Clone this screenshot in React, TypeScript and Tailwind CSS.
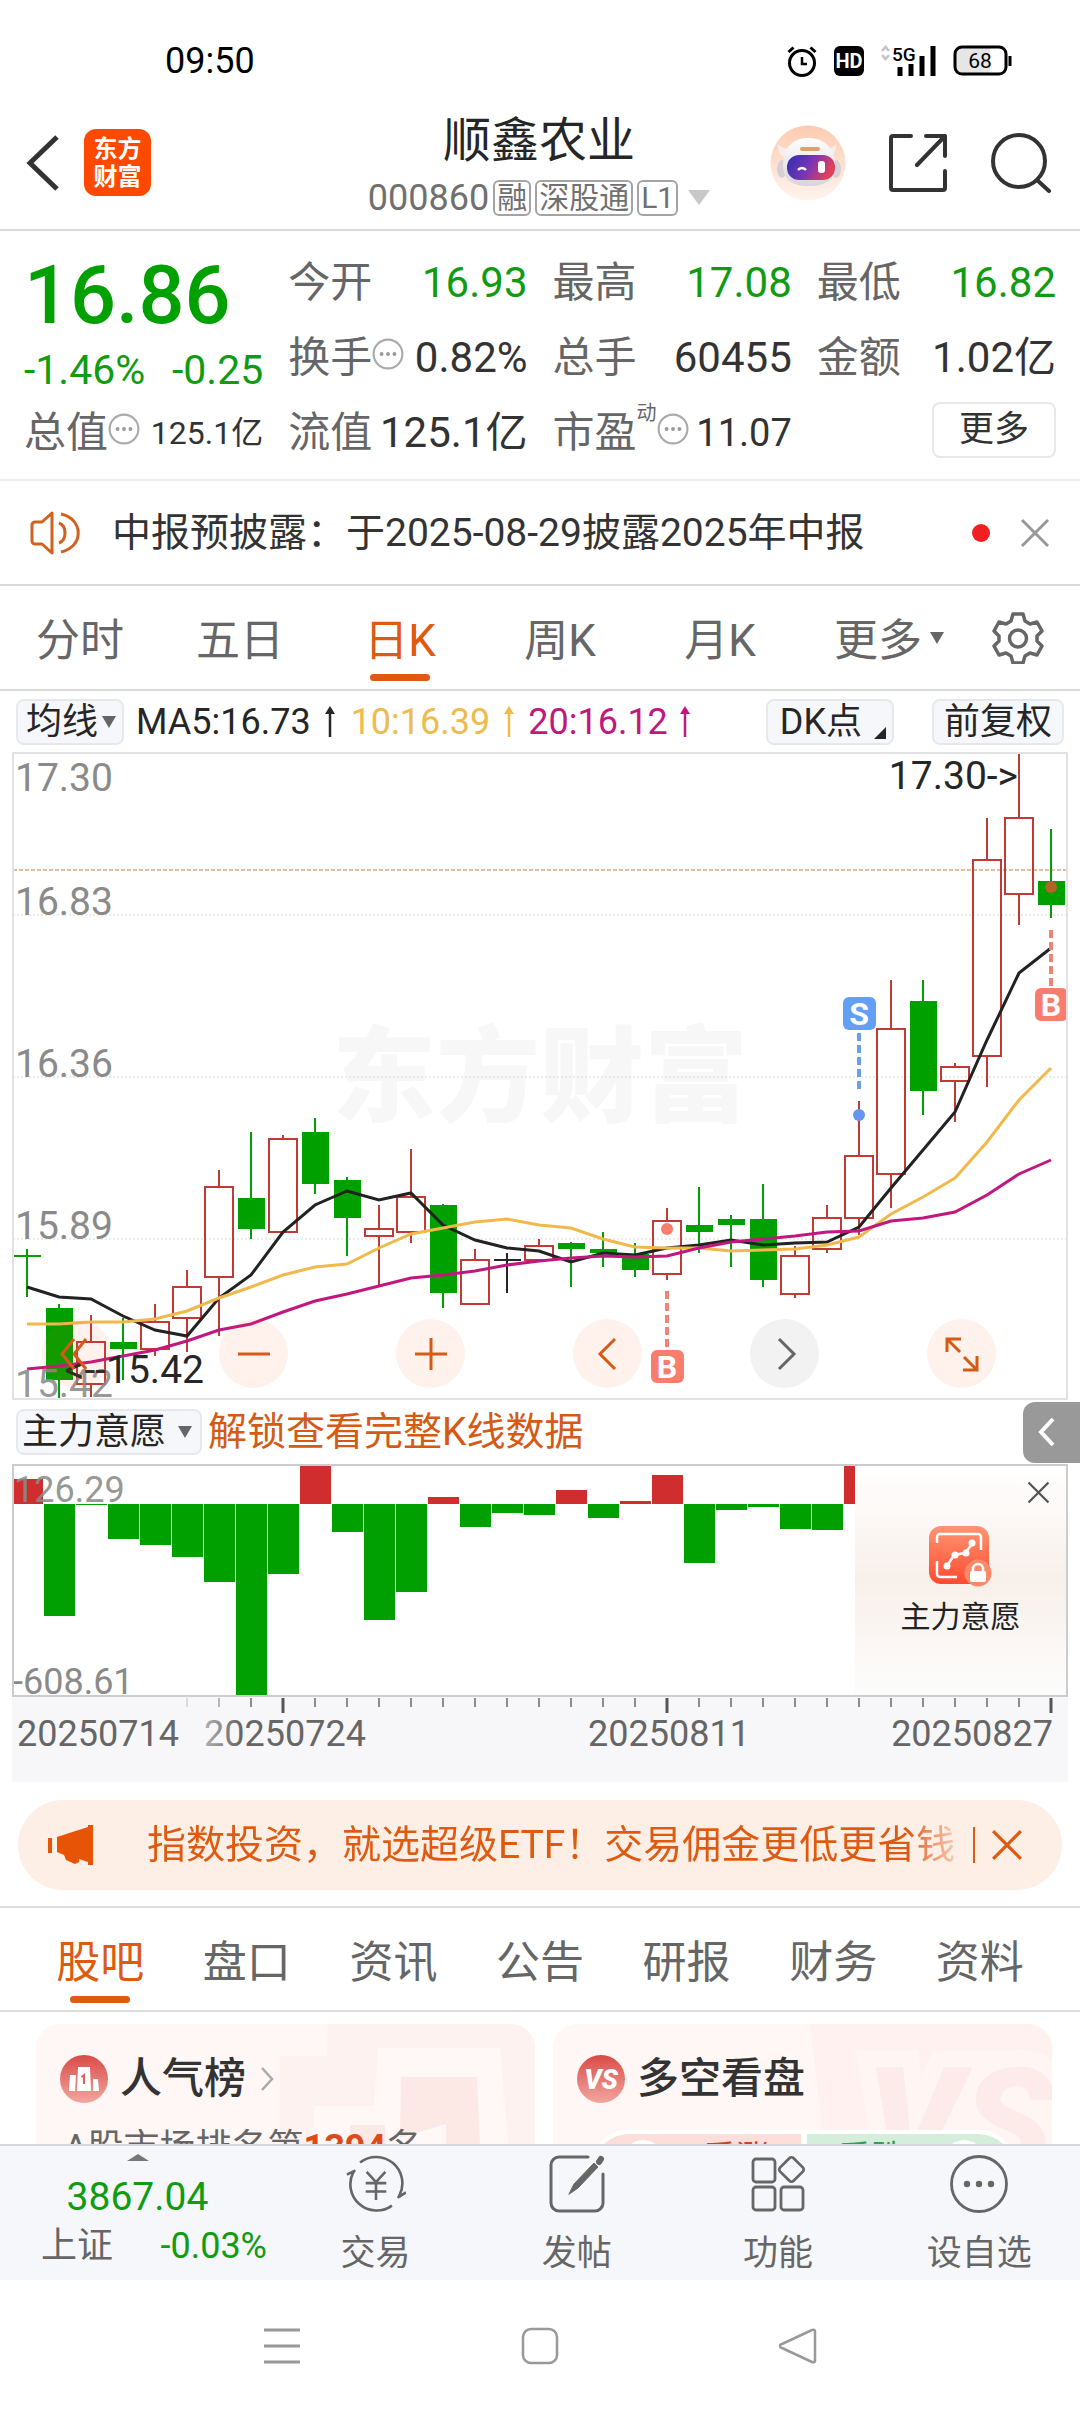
import React from "react";

type Tone = "up" | "down" | "flat";
type Candle = [high: number, top: number, bottom: number, low: number, tone: Tone];

const RED = "#c23a36";
const GREEN = "#00a000";

const candles: Candle[] = [
  [1210, 1224, 1229, 1324, "down"],
  [1341, 1349, 1520, 1566, "down"],
  [1366, 1431, 1530, 1562, "up"],
  [1374, 1431, 1447, 1521, "down"],
  [1341, 1382, 1447, 1463, "up"],
  [1259, 1300, 1374, 1455, "up"],
  [1022, 1062, 1276, 1415, "up"],
  [931, 1088, 1161, 1186, "down"],
  [939, 947, 1169, 1169, "up"],
  [899, 931, 1055, 1079, "down"],
  [1038, 1046, 1136, 1226, "down"],
  [1104, 1161, 1179, 1300, "up"],
  [972, 1087, 1169, 1194, "up"],
  [1103, 1105, 1315, 1349, "down"],
  [1210, 1235, 1341, 1341, "up"],
  [1218, 1233, 1238, 1315, "flat"],
  [1185, 1202, 1235, 1240, "up"],
  [1192, 1194, 1209, 1300, "down"],
  [1169, 1210, 1218, 1251, "down"],
  [1194, 1221, 1259, 1276, "down"],
  [1112, 1144, 1268, 1283, "up"],
  [1063, 1152, 1169, 1218, "down"],
  [1128, 1137, 1152, 1251, "down"],
  [1055, 1137, 1283, 1300, "down"],
  [1202, 1226, 1317, 1325, "up"],
  [1104, 1136, 1210, 1218, "up"],
  [858, 989, 1136, 1175, "up"],
  [571, 686, 1030, 1112, "up"],
  [571, 620, 833, 890, "down"],
  [767, 776, 810, 908, "up"],
  [186, 284, 751, 825, "up"],
  [30, 186, 367, 440, "up"],
  [211, 334, 391, 424, "down"],
];

const ma5 = [1299, 1324, 1328, 1368, 1401, 1416, 1325, 1270, 1169, 1104, 1072, 1092, 1077, 1152, 1187, 1207, 1215, 1240, 1219, 1223, 1207, 1199, 1189, 1201, 1196, 1193, 1158, 1065, 975, 884, 712, 553, 495];
const ma10 = [1388, 1388, 1382, 1383, 1375, 1357, 1325, 1299, 1270, 1253, 1244, 1208, 1174, 1160, 1146, 1139, 1153, 1159, 1186, 1205, 1207, 1208, 1213, 1212, 1210, 1200, 1180, 1127, 1087, 1040, 955, 856, 779];
const ma20 = [1494, 1487, 1478, 1463, 1450, 1427, 1402, 1387, 1358, 1332, 1316, 1298, 1278, 1272, 1261, 1248, 1239, 1230, 1227, 1229, 1225, 1208, 1193, 1185, 1178, 1170, 1166, 1143, 1136, 1122, 1080, 1032, 997];

const flow = [79, 216, 105, 139, 145, 157, 182, 296, 174, 65, 132, 220, 192, 97, 127, 113, 115, 90, 118, 101, 75, 163, 110, 107, 129, 130, 65];

const xAt = (i: number) => 27 + 32 * i;
const yAt = (v: number) => Math.round(v / 2.376);
const line = (values: number[]) => values.map((v, i) => `${xAt(i)},${yAt(v)}`).join(" ");

function Marker({ x, y, label, color }: { x: number; y: number; label: string; color: string }) {
  return (
    <g>
      <rect x={x - 16} y={y} width={33} height={33} rx={6} fill={color} />
      <text x={x} y={y + 28} textAnchor="middle" fontSize={32} fontWeight={700} fill="#fff">{label}</text>
    </g>
  );
}

function PriceChart() {
  return (
    <svg viewBox="12 12 1056 648" className="block w-full" role="img" aria-label="日K线图">
      <text x={540} y={374} textAnchor="middle" fontSize={104} fontWeight={900} fill="#f7f7f7">东方财富</text>
      {[175, 337, 499].map((y) => (
        <line key={y} x1={13} x2={1067} y1={y} y2={y} stroke="#d9d9d9" strokeWidth={1} strokeDasharray="2 2" />
      ))}
      <line x1={13} x2={1067} y1={130} y2={130} stroke="#c27c4a" strokeWidth={1} strokeDasharray="4 2" />
      <g fontSize={39} fill="#8a8a8a">
        <text x={15} y={51}>17.30</text>
        <text x={15} y={175}>16.83</text>
        <text x={15} y={337}>16.36</text>
        <text x={15} y={499}>15.89</text>
      </g>
      {candles.map(([h, t, b, l, tone], i) => {
        const x = xAt(i);
        const color = tone === "up" ? RED : tone === "down" ? GREEN : "#262626";
        const top = yAt(t);
        const height = Math.max(2, yAt(b) - top);
        return (
          <g key={i}>
            <line x1={x} x2={x} y1={yAt(h)} y2={top} stroke={color} strokeWidth={2} />
            <line x1={x} x2={x} y1={yAt(b)} y2={yAt(l)} stroke={color} strokeWidth={2} />
            {tone === "up" ? (
              <rect x={x - 14} y={top} width={28} height={height} fill="none" stroke={color} strokeWidth={2} />
            ) : (
              <rect x={x - 13} y={top} width={27} height={height} fill={color} />
            )}
          </g>
        );
      })}
      <polyline points={line(ma5)} fill="none" stroke="#222" strokeWidth={3} />
      <polyline points={line(ma10)} fill="none" stroke="#f0b94c" strokeWidth={3} />
      <polyline points={line(ma20)} fill="none" stroke="#c0187e" strokeWidth={3} />
      <text x={15} y={657} fontSize={39} fill="#8a8a8a" fillOpacity={0.9}>15.42</text>
      <text x={204} y={643} textAnchor="end" fontSize={39} fill="#262626">&lt;--15.42</text>
      <text x={1018} y={49} textAnchor="end" fontSize={39} fill="#262626">17.30-&gt;</text>
      <circle cx={667} cy={489} r={6} fill="#f97d6d" />
      <circle cx={859} cy={375} r={6} fill="#6496f0" />
      <circle cx={1051} cy={147} r={6} fill="#b5612a" />
      <line x1={667} x2={667} y1={551} y2={608} stroke="#ee8476" strokeWidth={4} strokeDasharray="8 4" />
      <line x1={859} x2={859} y1={293} y2={350} stroke="#6aa0ea" strokeWidth={4} strokeDasharray="8 4" />
      <line x1={1051} x2={1051} y1={190} y2={246} stroke="#ee8476" strokeWidth={4} strokeDasharray="8 4" />
      <Marker x={667} y={610} label="B" color="#f97d6d" />
      <Marker x={859} y={257} label="S" color="#62a0f8" />
      <Marker x={1051} y={248} label="B" color="#f97d6d" />
    </svg>
  );
}

function FlowChart() {
  return (
    <svg viewBox="12 64 1056 233" className="block w-full" role="img" aria-label="主力意愿">
      {flow.map((v, i) => {
        const up = v < 104;
        const left = i === 0 ? 13 : xAt(i) - 15;
        const right = i === 26 ? 857 : xAt(i) + 16;
        return (
          <rect key={i} x={left} width={right - left} y={up ? v : 104} height={Math.abs(v - 104)} fill={up ? "#d02e2e" : GREEN} />
        );
      })}
      <g fontSize={36} fill="#8a8a8a">
        <text x={14} y={102} fillOpacity={0.9}>126.29</text>
        <text x={13} y={294}>-608.61</text>
      </g>
    </svg>
  );
}

function DateAxis() {
  const ticks = Array.from({ length: 28 }, (_, k) => k + 5);
  return (
    <svg viewBox="12 297 1056 85" className="block w-full bg-[#f7f7fa]" role="img" aria-label="日期">
      <defs>
        <linearGradient id="dateFade" gradientUnits="userSpaceOnUse" x1={195} x2={240} y1={0} y2={0}>
          <stop offset="0" stopColor="#c4c4c6" />
          <stop offset="1" stopColor="#666" />
        </linearGradient>
      </defs>
      {ticks.map((i) => {
        const major = i === 8 || i === 20 || i === 32;
        return (
          <line key={i} x1={xAt(i)} x2={xAt(i)} y1={298} y2={major ? 313 : 307} stroke={major ? "#555" : "#8c8c8c"} strokeWidth={major ? 3 : 2} opacity={i === 5 ? 0.25 : i === 6 ? 0.6 : 1} />
        );
      })}
      <g fontSize={36} fill="#666">
        <text x={17} y={346}>20250714</text>
        <text x={204} y={346} fill="url(#dateFade)">20250724</text>
        <text x={588} y={346}>20250811</text>
        <text x={1053} y={346} textAnchor="end">20250827</text>
      </g>
    </svg>
  );
}

function StatusBar() {
  return (
    <div className="flex h-[110px] items-center pt-3 pl-[165px] pr-[68px]">
      <span className="text-4xl leading-none text-black">09:50</span>
      <div className="ml-auto flex items-center gap-[17px]">
        <svg viewBox="0 0 30 32" className="h-8 w-[30px]" fill="none" stroke="#000" aria-hidden="true">
          <circle cx="15" cy="18" r="12.500" strokeWidth="3" />
          <path d="M15 12v7h5" strokeWidth="2.500" />
          <path d="M1.500 7 6.500 2.500M28.500 7 23.500 2.500" strokeWidth="3" />
        </svg>
        <span className="flex h-[30px] w-[30px] items-center justify-center rounded-md bg-black text-xl font-bold text-white">HD</span>
        <div className="flex items-start">
          <svg viewBox="0 0 9 16" className="h-4 w-[9px]" fill="none" stroke="#c4c4c4" strokeWidth="2.500" aria-hidden="true">
            <path d="M1 6l3.500-4L8 6M1 10l3.500 4L8 10" />
          </svg>
          <svg viewBox="0 0 46 32" className="h-8 w-[46px]" aria-hidden="true">
            <text x="2" y="16" fontSize="19" fontWeight="500">5G</text>
            <g stroke="#000" strokeWidth="5">
              <path d="M10 22v9M21 19v12M32 11v20M43 1v30" />
            </g>
          </svg>
        </div>
        <svg viewBox="0 0 59 32" className="h-8 w-[59px]" aria-hidden="true">
          <rect x="2" y="2" width="51" height="27" rx="7" fill="#fff" />
          <path d="M9 2h28v27H9a7 7 0 0 1-7-7V9a7 7 0 0 1 7-7z" fill="#e6e6e6" />
          <rect x="2" y="2" width="51" height="27" rx="7" fill="none" stroke="#000" strokeWidth="3" />
          <path d="M57 11v10" stroke="#000" strokeWidth="3" />
          <text x="27" y="23" textAnchor="middle" fontSize="21">68</text>
        </svg>
      </div>
    </div>
  );
}

function Robot() {
  return (
    <svg viewBox="0 0 76 76" className="h-[76px] w-[76px]" aria-hidden="true">
      <defs>
        <linearGradient id="halo" x1="0" y1="0" x2="0" y2="1">
          <stop offset="0" stopColor="#fdcbb0" />
          <stop offset="1" stopColor="#fff4ee" />
        </linearGradient>
        <linearGradient id="visor" x1="0" y1="0" x2="1" y2="0.300">
          <stop offset="0" stopColor="#2b2fae" />
          <stop offset="0.550" stopColor="#7a35b5" />
          <stop offset="1" stopColor="#e2405a" />
        </linearGradient>
        <linearGradient id="shell" x1="0" y1="0" x2="0" y2="1">
          <stop offset="0" stopColor="#fff" />
          <stop offset="1" stopColor="#d9d4da" />
        </linearGradient>
      </defs>
      <circle cx="38" cy="38" r="37.500" fill="url(#halo)" />
      <path d="M8 19c0 9 3 13 9 14l5-9c-6 0-11-1-14-5zM66 19c0 9-3 13-9 14l-4-9c6 0 10-1 13-5z" fill="#f4eeee" />
      <ellipse cx="12" cy="44" rx="5" ry="9" fill="#d6d0d6" />
      <ellipse cx="66" cy="44" rx="5" ry="9" fill="#d6d0d6" />
      <path d="M38 13c16 0 27 10 27 27 0 13-7 21-26 21S13 53 13 40c0-17 10-27 25-27z" fill="url(#shell)" />
      <rect x="30" y="22" width="20" height="4" rx="2" fill="#d9a26e" />
      <rect x="17" y="30" width="48" height="25" rx="12" fill="url(#visor)" />
      <path d="M28 45a5 5 0 0 1 8 0" fill="none" stroke="#fff" strokeWidth="2.500" />
      <rect x="48" y="36" width="7" height="12" rx="3" fill="#fff" />
    </svg>
  );
}

function Header() {
  const tag = "flex h-9 items-center rounded-md border-2 border-[#a3a3a3] px-0.5 text-[30px] leading-none text-[#707070]";
  return (
    <header className="grid h-[121px] grid-cols-[1fr_auto_1fr] border-b-2 border-[#dadada] pr-[28px] pl-[26px]">
      <div className="flex items-center gap-6 pb-3.5">
        <button aria-label="返回">
          <svg viewBox="0 0 34 56" className="h-14 w-[34px]" fill="none" stroke="#333" strokeWidth="5" aria-hidden="true">
            <path d="M31 2 4 28l27 26" />
          </svg>
        </button>
        <div className="flex h-[67px] w-[67px] flex-col items-center justify-center rounded-xl bg-[#ff4800] text-2xl leading-7 font-bold text-white">
          <span>东方</span>
          <span>财富</span>
        </div>
      </div>
      <div className="flex flex-col items-center pt-0.5">
        <h1 className="text-5xl leading-[58px] text-[#262626]">顺鑫农业</h1>
        <button className="flex h-14 items-center gap-1 text-[#707070]">
          <span className="text-4xl leading-none">000860</span>
          <span className={tag}>融</span>
          <span className={tag}>深股通</span>
          <span className={tag}>L1</span>
          <svg viewBox="0 0 22 16" className="ml-1.5 h-4 w-[22px]" aria-hidden="true"><path d="M0 0h22L11 15z" fill="#c8c8c8" /></svg>
        </button>
      </div>
      <div className="flex items-center justify-end gap-[43px] pb-3.5">
        <button aria-label="智能助手"><Robot /></button>
        <button aria-label="分享">
          <svg viewBox="0 0 58 58" className="h-[58px] w-[58px]" fill="none" stroke="#333" strokeWidth="4" strokeLinecap="round" strokeLinejoin="round" aria-hidden="true">
            <path d="M22 2H4a2 2 0 0 0-2 2v50a2 2 0 0 0 2 2h50a2 2 0 0 0 2-2V37" />
            <path d="M37 2h19v20M56 2 28 31" />
          </svg>
        </button>
        <button aria-label="搜索">
          <svg viewBox="0 0 62 60" className="h-[60px] w-[62px]" fill="none" stroke="#333" strokeWidth="4" strokeLinecap="round" aria-hidden="true">
            <circle cx="29" cy="28" r="26" />
            <path d="M47 47 59 58" />
          </svg>
        </button>
      </div>
    </header>
  );
}

function Info() {
  return (
    <svg viewBox="0 0 30 30" className="mb-2 h-8 w-8 shrink-0" aria-hidden="true">
      <circle cx="15" cy="15" r="13.500" fill="none" stroke="#aaa" strokeWidth="2" />
      <g fill="#999"><circle cx="9" cy="15" r="1.800" /><circle cx="15" cy="15" r="1.800" /><circle cx="21" cy="15" r="1.800" /></g>
    </svg>
  );
}

const valueSize = { sm: "text-[32px]", md: "text-[38px]", lg: "text-[42px]" };

function Quote({ label, value, green, info, sup, size = "lg" }: { label: string; value: string; green?: boolean; info?: boolean; sup?: string; size?: keyof typeof valueSize }) {
  return (
    <div className="flex h-[75px] items-center whitespace-nowrap">
      <span className="text-[42px] leading-none text-[#666]">{label}</span>
      {sup && <span className="self-start pt-2 text-xl leading-none text-[#666]">{sup}</span>}
      {info && <Info />}
      <span className={`ml-auto leading-none ${valueSize[size]} ${green ? "text-[#109c10]" : "text-[#333]"}`}>{value}</span>
    </div>
  );
}

function Quotes() {
  return (
    <section className="grid grid-cols-4 gap-x-[25px] border-b-2 border-[#ececec] px-6 pt-[14px] pb-[9px]">
      <div>
        <div className="flex h-[100px] items-center text-[81px] leading-none font-medium text-[#00a000]">16.86</div>
        <div className="flex h-[50px] items-center justify-between text-[41px] leading-none text-[#109c10]">
          <span>-1.46%</span>
          <span>-0.25</span>
        </div>
        <Quote label="总值" value="125.1亿" info size="sm" />
      </div>
      <div>
        <Quote label="今开" value="16.93" green />
        <Quote label="换手" value="0.82%" info />
        <Quote label="流值" value="125.1亿" />
      </div>
      <div>
        <Quote label="最高" value="17.08" green />
        <Quote label="总手" value="60455" />
        <Quote label="市盈" value="11.07" info sup="动" size="md" />
      </div>
      <div>
        <Quote label="最低" value="16.82" green />
        <Quote label="金额" value="1.02亿" />
        <div className="flex h-[75px] items-center justify-end pb-1.5">
          <button className="h-14 w-[124px] rounded-lg border-2 border-[#e8e8e8] text-[35px] leading-none text-[#333]">更多</button>
        </div>
      </div>
    </section>
  );
}

function Cross({ className }: { className: string }) {
  return (
    <svg viewBox="0 0 30 30" className={className} fill="none" stroke="currentColor" strokeWidth="3" aria-hidden="true">
      <path d="M2 2l26 26M28 2 2 28" />
    </svg>
  );
}

function Notice() {
  return (
    <section className="flex h-[105px] items-center border-b-2 border-[#dadada] pr-[30px] pl-[30px]">
      <svg viewBox="0 0 50 44" className="h-11 w-[50px]" fill="none" stroke="#d2601f" strokeWidth="3" aria-hidden="true">
        <path d="M22 2v40L12 33H5a3 3 0 0 1-3-3V14a3 3 0 0 1 3-3h7z" strokeLinejoin="round" />
        <path d="M29 12c8 3 8 17 0 20M31 3c23 5 23 33 0 38" />
      </svg>
      <p className="ml-8 pt-0.5 text-[39px] leading-none text-[#333]">中报预披露：于2025-08-29披露2025年中报</p>
      <span className="ml-auto h-[18px] w-[18px] rounded-full bg-[#f02020]" />
      <button aria-label="关闭" className="ml-[30px] text-[#999]"><Cross className="h-[30px] w-[30px]" /></button>
    </section>
  );
}

function PeriodTabs() {
  const tabs = ["分时", "五日", "日K", "周K", "月K"];
  return (
    <nav className="grid h-[105px] grid-cols-[repeat(6,1fr)_120px] border-b-2 border-[#dadada] text-[44px] leading-none text-[#666]">
      {tabs.map((t) => {
        const on = t === "日K";
        return (
          <button key={t} className={`relative pt-1.5 ${on ? "text-[#dd5a10]" : ""}`}>
            {t}
            {on && <span className="absolute bottom-2 left-1/2 h-[7px] w-[60px] -translate-x-1/2 rounded-full bg-[#dd5a10]" />}
          </button>
        );
      })}
      <button className="flex items-center justify-end gap-2 pt-1.5 pr-4">
        更多
        <svg viewBox="0 0 14 12" className="mb-1.5 h-3 w-[14px]" aria-hidden="true"><path d="M0 0h14L7 12z" fill="#666" /></svg>
      </button>
      <button aria-label="设置" className="flex items-center justify-center pr-1">
        <svg viewBox="0 0 52 52" className="h-[52px] w-[52px]" fill="none" stroke="#666" strokeWidth="3.500" strokeLinejoin="round" aria-hidden="true">
          <path d="M21 2h10l2 7 5 3 7-2 5 9-5 5v5l5 5-5 9-7-2-5 3-2 7H21l-2-7-5-3-7 2-5-9 5-5v-5l-5-5 5-9 7 2 5-3z" />
          <circle cx="26" cy="26.500" r="8.500" />
        </svg>
      </button>
    </nav>
  );
}

function Up() {
  return (
    <svg viewBox="0 0 10 32" className="h-8 w-[10px]" aria-hidden="true">
      <path d="M5 31V4" stroke="currentColor" strokeWidth="2.500" />
      <path d="M0 8l5-8 5 8z" fill="currentColor" />
    </svg>
  );
}

const pill = "flex h-[46px] items-center rounded-lg border-2 border-[#e6e9ec] bg-[#f6f7fa] text-4xl leading-none text-[#262626]";

function MaRow() {
  return (
    <div className="flex h-[61px] items-center px-4 text-4xl leading-none whitespace-nowrap">
      <button className={`${pill} gap-1 pr-1.5 pl-2`}>
        均线
        <svg viewBox="0 0 14 12" className="h-3 w-[14px]" aria-hidden="true"><path d="M0 0h14L7 12z" fill="#666" /></svg>
      </button>
      <span className="ml-3 flex items-center gap-3.5 text-[#262626]">MA5:16.73<Up /></span>
      <span className="ml-4 flex items-center gap-3.5 text-[#eebb4d]">10:16.39<Up /></span>
      <span className="ml-3.5 flex items-center gap-3 text-[#c0187e]">20:16.12<Up /></span>
      <button className={`${pill} ml-auto gap-3 pr-1.5 pl-3`}>
        DK点
        <svg viewBox="0 0 12 12" className="mt-[22px] h-3 w-3" aria-hidden="true"><path d="M12 0v12H0z" fill="#262626" /></svg>
      </button>
      <button className={`${pill} ml-[38px] px-2.5`}>前复权</button>
    </div>
  );
}

const toolIcons: { name: string; d: string; gray?: boolean }[] = [
  { name: "最早", d: "M16 4 4 19l12 15M28 4 16 19l12 15" },
  { name: "缩小", d: "M3 19h32" },
  { name: "放大", d: "M3 19h32M19 3v32" },
  { name: "左移", d: "M26 4 11 19l15 15" },
  { name: "右移", d: "M13 4l15 15-15 15", gray: true },
  { name: "全屏", d: "M4 17V4h14M4 4l13 13M21 22l13 13M34 21v14H20" },
];

function ChartTools() {
  return (
    <div className="absolute right-[72px] bottom-3 left-[30px] flex justify-between">
      {toolIcons.map(({ name, d, gray }) => (
        <button key={name} aria-label={name} className={`flex h-[69px] w-[69px] items-center justify-center rounded-full ${gray ? "bg-[#f2f2f2] text-[#666]" : "bg-[#ff5a10]/8 text-[#d55a16]"}`}>
          <svg viewBox="0 0 38 38" className="h-[38px] w-[38px]" fill="none" stroke="currentColor" strokeWidth="3" aria-hidden="true"><path d={d} /></svg>
        </button>
      ))}
    </div>
  );
}

function LockedPanel() {
  return (
    <div className="absolute inset-y-0.5 right-0.5 flex w-1/5 flex-col items-center bg-linear-to-b from-white via-[#f8f0ea] to-[#fdfdfd] pt-[59px]">
      <button aria-label="关闭" className="absolute top-[15px] right-[16px] text-[#555]"><Cross className="h-[23px] w-[23px]" /></button>
      <svg viewBox="0 0 64 62" className="h-[62px] w-16" aria-hidden="true">
        <defs>
          <linearGradient id="lockBg" x1="0" y1="0" x2="0" y2="1">
            <stop offset="0" stopColor="#ff9573" />
            <stop offset="1" stopColor="#ff4a30" />
          </linearGradient>
        </defs>
        <rect x="1" y="1" width="60" height="58" rx="12" fill="url(#lockBg)" />
        <g fill="none" stroke="#fff" strokeWidth="2.500">
          <path d="M9 18v-6a3 3 0 0 1 3-3h38a3 3 0 0 1 3 3v13M9 36v13a3 3 0 0 0 3 3h17" />
          <path d="M19 41l7-11 11-2 7-9" />
        </g>
        <g fill="#fff"><circle cx="19" cy="41" r="3.500" /><circle cx="27" cy="30" r="3.500" /><circle cx="38" cy="28" r="3.500" /><circle cx="44" cy="18" r="3.500" /></g>
        <circle cx="50" cy="48" r="13.500" fill="#ff8868" />
        <path d="M45 47v-3a5 5 0 0 1 10 0v3" fill="none" stroke="#fff" strokeWidth="2.500" />
        <rect x="42" y="46" width="16" height="11" rx="2" fill="#fff" />
      </svg>
      <span className="mt-3 text-[30px] leading-9 text-[#222]">主力意愿</span>
    </div>
  );
}

function IndicatorRow() {
  return (
    <div className="flex h-16 items-center pl-4">
      <button className={`${pill} gap-3 pr-2 pl-1`}>
        主力意愿
        <svg viewBox="0 0 14 12" className="h-3 w-[14px]" aria-hidden="true"><path d="M0 0h14L7 12z" fill="#666" /></svg>
      </button>
      <a href="#unlock" className="ml-1.5 text-[39px] leading-none text-[#d55a16]">解锁查看完整K线数据</a>
      <button aria-label="展开" className="ml-auto flex h-[61px] w-[57px] items-center justify-center rounded-l-xl bg-[#999] pr-2.5">
        <svg viewBox="0 0 18 30" className="h-[30px] w-[18px]" fill="none" stroke="#fff" strokeWidth="4" aria-hidden="true"><path d="M15 2 3 15l12 13" /></svg>
      </button>
    </div>
  );
}

function Banner() {
  return (
    <section className="mx-[18px] mt-[18px] flex h-[90px] items-center rounded-full bg-[#fdeee6] pr-[39px] pl-[29px] text-[#dd5a10]">
      <svg viewBox="0 0 47 40" className="h-10 w-[47px] shrink-0" fill="#e85405" aria-hidden="true">
        <path d="M1 13h4v15H1zM10 12 41 2V0h5v40h-5v-3l-9-3v3l-4 2-9-4-2-5-7-3z" />
      </svg>
      <p className="ml-[53px] flex-1 overflow-hidden bg-linear-to-r from-[#dd5a10] from-94% to-[#f7cdb5] bg-clip-text text-[39px] leading-[56px] whitespace-nowrap text-transparent">
        指数投资，就选超级ETF！交易佣金更低更省钱
      </p>
      <span className="mr-[16px] ml-[16px] h-9 w-0.5 bg-[#dd5a10]" />
      <button aria-label="关闭广告"><Cross className="h-8 w-8" /></button>
    </section>
  );
}

function ContentTabs() {
  const tabs = ["股吧", "盘口", "资讯", "公告", "研报", "财务", "资料"];
  return (
    <nav className="mt-4 flex h-[106px] border-y-2 border-[#dadada] px-[27px] text-[44px] leading-none text-[#666]">
      {tabs.map((t, i) => (
        <button key={t} className={`relative flex-1 pt-2 ${i === 0 ? "text-[#dd5a10]" : ""}`}>
          {t}
          {i === 0 && <span className="absolute bottom-[7px] left-1/2 h-[7px] w-[60px] -translate-x-1/2 rounded-full bg-[#dd5a10]" />}
        </button>
      ))}
    </nav>
  );
}

function Cards() {
  return (
    <section className="grid h-[132px] grid-cols-2 gap-[18px] overflow-hidden pt-3 pr-7 pl-9">
      <div className="relative h-[200px] overflow-hidden rounded-[24px] bg-[#fef7f5] pl-6">
        <svg viewBox="0 0 255 120" className="absolute top-0 right-0 h-[120px] w-[255px]" aria-hidden="true">
          <path d="M48 0h207v120H0V32h47z" fill="#fef2f0" />
          <path d="M98 24h122l8 96H34V82h60z" fill="#fff8f6" />
          <path d="M121 53h76l3 67h-34v-20l-46 14zM70 101h35v19H70z" fill="#fce9e6" />
        </svg>
        <a href="#rank" className="relative flex h-[110px] items-center">
          <svg viewBox="0 0 48 48" className="h-12 w-12" aria-hidden="true">
            <defs>
              <linearGradient id="badge" x1="0" y1="0" x2="0" y2="1">
                <stop offset="0" stopColor="#d94c47" />
                <stop offset="1" stopColor="#f3a5a0" />
              </linearGradient>
            </defs>
            <circle cx="24" cy="24" r="24" fill="url(#badge)" />
            <path d="M10 20h6l-1 16H9zM18 12h12l1 24H17zM33 24h5l1 12h-6z" fill="#fff" />
            <path d="M21.500 22 24 20v9" fill="none" stroke="#d9625d" strokeWidth="2" />
          </svg>
          <h2 className="ml-3 text-[42px] leading-none font-medium text-[#333]">人气榜</h2>
          <svg viewBox="0 0 14 24" className="ml-3.5 h-6 w-[14px]" fill="none" stroke="#aaa" strokeWidth="2.500" aria-hidden="true"><path d="M2 1l10 11L2 23" /></svg>
        </a>
        <p className="relative -mt-1 pl-1 text-4xl leading-9 whitespace-nowrap text-[#666]">A股市场排名第<b className="text-[#dd4a1a]">1394</b>名</p>
      </div>
      <div className="relative h-[200px] overflow-hidden rounded-[24px] bg-[#fef7f5] pl-6">
        <svg viewBox="0 0 242 120" className="absolute top-0 right-0 h-[120px] w-[242px]" aria-hidden="true">
          <path d="M0 0h242v120H14z" fill="#fef1ef" />
          <text x="56" y="150" fontSize="150" fontWeight="900" fontStyle="italic" fill="#fdebe9" stroke="#fff6f4" strokeWidth="34" paintOrder="stroke">VS</text>
        </svg>
        <div className="relative flex h-[110px] items-center">
          <svg viewBox="0 0 48 48" className="h-12 w-12" aria-hidden="true">
            <circle cx="24" cy="24" r="24" fill="url(#badge)" />
            <text x="24" y="34" textAnchor="middle" fontSize="27" fontWeight="900" fontStyle="italic" fill="#fff">VS</text>
          </svg>
          <h2 className="ml-3 text-[42px] leading-none font-medium text-[#333]">多空看盘</h2>
        </div>
        <div className="relative -mt-1 mr-[34px] ml-3 flex h-20 gap-1.5 overflow-hidden rounded-full border-4 border-white bg-white text-[33px] leading-9">
          <button className="flex flex-1 items-start gap-10 bg-[#fddedb] pt-1.5 pl-[30px] text-[#d0451c]"><span className="h-10 w-10 rounded-full bg-white" />看涨</button>
          <button className="flex flex-1 items-start justify-end gap-10 bg-[#d5eedb] pt-1.5 pr-[30px] text-[#2f9e57]">看跌<span className="h-10 w-10 rounded-full bg-white" /></button>
        </div>
      </div>
    </section>
  );
}

function BottomBar() {
  const item = "flex flex-1 flex-col items-center pt-2 text-[35px] leading-10 text-[#666]";
  const icon = "mb-5 h-[60px] w-[60px]";
  return (
    <nav className="flex h-[136px] border-t-2 border-[#d5d7dc] bg-[#f6f7fa]">
      <button className="flex w-[275px] flex-col items-center pt-2">
        <svg viewBox="0 0 22 7" className="h-[7px] w-[22px]" aria-hidden="true"><path d="M0 7 11 0l11 7z" fill="#777" /></svg>
        <span className="mt-3 text-[39px] leading-[48px] text-[#109c10]">3867.04</span>
        <span className="flex w-full items-center justify-between pr-2 pl-[41px] text-4xl leading-[50px] text-[#666]">
          <span>上证</span>
          <span className="text-[#109c10]">-0.03%</span>
        </span>
      </button>
      <button className={item}>
        <svg viewBox="0 0 64 60" className={icon} fill="none" stroke="#666" strokeWidth="2.800" aria-hidden="true">
          <path d="M15 7a28 28 0 0 1 42 35l-1 2 8-5M49 53A28 28 0 0 1 8 17l1-1-8 4" strokeLinejoin="round" />
          <path d="M22 17l10 11 10-11M21 29h22M21 38h22M32 28v19" />
        </svg>
        交易
      </button>
      <button className={item}>
        <svg viewBox="0 0 60 60" className={icon} fill="none" stroke="#666" strokeWidth="3" strokeLinecap="round" aria-hidden="true">
          <path d="M41 3H12a8 8 0 0 0-8 8v38a8 8 0 0 0 8 8h36a8 8 0 0 0 8-8V20" />
          <path d="M22 40l5-10 20-21 4 4-20 21z" fill="#666" strokeWidth="1" />
          <path d="M52 8l2-3" strokeWidth="6" />
        </svg>
        发帖
      </button>
      <button className={item}>
        <svg viewBox="0 0 60 60" className={icon} fill="none" stroke="#666" strokeWidth="2.800" aria-hidden="true">
          <rect x="5" y="5" width="22" height="23" rx="3" />
          <rect x="5" y="33" width="22" height="23" rx="3" />
          <rect x="33" y="33" width="22" height="23" rx="3" />
          <rect x="34" y="6" width="19" height="19" rx="3" transform="rotate(45 43.500 15.500)" />
        </svg>
        功能
      </button>
      <button className={item}>
        <svg viewBox="0 0 60 60" className={icon} aria-hidden="true">
          <circle cx="30" cy="30" r="27.500" fill="none" stroke="#666" strokeWidth="2.800" />
          <g fill="#666"><circle cx="18" cy="30" r="3.200" /><circle cx="30" cy="30" r="3.200" /><circle cx="42" cy="30" r="3.200" /></g>
        </svg>
        设自选
      </button>
    </nav>
  );
}

function SystemNav() {
  const cls = "h-[38px] w-[38px]";
  return (
    <div className="flex h-[132px] items-center justify-center gap-[220px]">
      <button aria-label="最近任务">
        <svg viewBox="0 0 38 38" className={cls} stroke="#999" strokeWidth="3" aria-hidden="true"><path d="M1 3h36M1 19h36M1 35h36" /></svg>
      </button>
      <button aria-label="主屏幕">
        <svg viewBox="0 0 38 38" className={cls} fill="none" stroke="#999" strokeWidth="2.500" aria-hidden="true"><rect x="2" y="2" width="34" height="34" rx="8" /></svg>
      </button>
      <button aria-label="后退">
        <svg viewBox="0 0 38 38" className={cls} fill="none" stroke="#999" strokeWidth="2.500" strokeLinejoin="round" aria-hidden="true"><path d="M36 4v30a2 2 0 0 1-3 1L3 21a2 2 0 0 1 0-4L33 3a2 2 0 0 1 3 1z" /></svg>
      </button>
    </div>
  );
}

export default function App() {
  return (
    <main className="min-h-screen bg-white font-['Roboto','Noto_Sans_CJK_SC',sans-serif] text-[#333]">
      <StatusBar />
      <Header />
      <Quotes />
      <Notice />
      <PeriodTabs />
      <MaRow />
      <div className="mx-3">
        <div className="relative outline-2 -outline-offset-2 outline-[#e2e2e5]">
          <PriceChart />
          <ChartTools />
        </div>
      </div>
      <IndicatorRow />
      <div className="mx-3">
        <div className="relative outline-2 -outline-offset-2 outline-[#cccccc]">
          <FlowChart />
          <LockedPanel />
        </div>
        <DateAxis />
      </div>
      <Banner />
      <ContentTabs />
      <Cards />
      <BottomBar />
      <SystemNav />
    </main>
  );
}
